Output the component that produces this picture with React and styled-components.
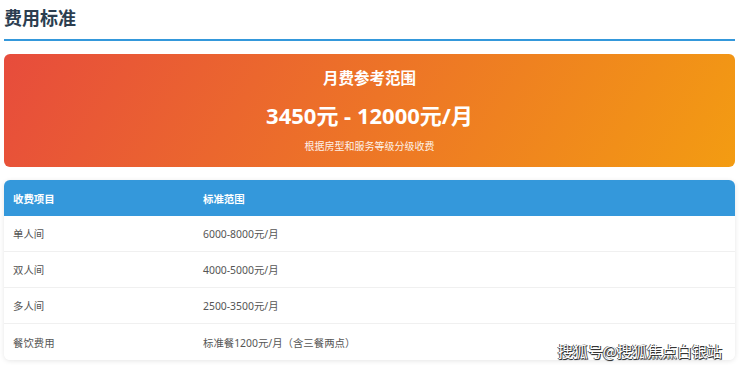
import React from "react";
import styled, { createGlobalStyle } from "styled-components";

const Global = createGlobalStyle`
  html, body { margin: 0; padding: 0; background: #fff; }
  body { font-family: "Noto Sans", "Noto Sans CJK SC", sans-serif; }
`;

const Page = styled.div`
  position: relative;
  width: 740px;
  height: 367px;
  padding: 8px 5px 0 4px;
  box-sizing: border-box;
  overflow: hidden;
`;

const Title = styled.h2`
  margin: 0;
  font-size: 18px;
  line-height: 21px;
  font-weight: 700;
  color: #2c3e50;
  padding-bottom: 10px;
  border-bottom: 2px solid #3498db;
`;

const Banner = styled.div`
  margin-top: 13px;
  height: 113px;
  box-sizing: border-box;
  padding-top: 14px;
  border-radius: 6px;
  background: linear-gradient(120deg, #e74c3c 0%, #f39c12 100%);
  color: #fff;
  display: flex;
  flex-direction: column;
  align-items: center;
`;

const BannerTitle = styled.div`
  font-size: 15.5px;
  line-height: 20px;
  font-weight: 700;
`;

const Price = styled.div`
  margin-top: 13px;
  font-size: 22px;
  line-height: 28px;
  font-weight: 700;
`;

const Note = styled.div`
  margin-top: 10px;
  font-size: 10px;
  line-height: 14px;
  opacity: 0.9;
`;

const TableCard = styled.div`
  margin-top: 13px;
  border-radius: 6px;
  overflow: hidden;
  background: #fff;
  box-shadow: 0 1px 5px rgba(0, 0, 0, 0.1);
`;

const Row = styled.div`
  display: grid;
  grid-template-columns: 190px 1fr;
  align-items: center;
  height: 36px;
  box-sizing: border-box;
  padding: 0 9px;
  background: ${(p) => (p.$head ? "#3498db" : "#fff")};
  color: ${(p) => (p.$head ? "#fff" : "#555")};
  font-weight: ${(p) => (p.$head ? 700 : 400)};
  font-size: 10.4px;
  border-bottom: ${(p) => (p.$last || p.$head ? "none" : "1px solid #f0f0f0")};
`;

const Watermark = styled.div`
  position: absolute;
  right: 18px;
  bottom: 7px;
  font-size: 15px;
  line-height: 18px;
  color: #fff;
  font-family: "Noto Sans CJK SC", sans-serif;
  text-shadow: 1px 1px 0 #333, -1px 0 0 #555, 0 1px 1px #333;
`;

const rows = [
  ["单人间", "6000-8000元/月"],
  ["双人间", "4000-5000元/月"],
  ["多人间", "2500-3500元/月"],
  ["餐饮费用", "标准餐1200元/月（含三餐两点）"],
];

export default function App() {
  return (
    <Page>
      <Global />
      <Title>费用标准</Title>
      <Banner>
        <BannerTitle>月费参考范围</BannerTitle>
        <Price>3450元 - 12000元/月</Price>
        <Note>根据房型和服务等级分级收费</Note>
      </Banner>
      <TableCard>
        <Row $head>
          <span>收费项目</span>
          <span>标准范围</span>
        </Row>
        {rows.map((r, i) => (
          <Row key={r[0]} $last={i === rows.length - 1}>
            <span>{r[0]}</span>
            <span>{r[1]}</span>
          </Row>
        ))}
      </TableCard>
      <Watermark>搜狐号@搜狐焦点白银站</Watermark>
    </Page>
  );
}
